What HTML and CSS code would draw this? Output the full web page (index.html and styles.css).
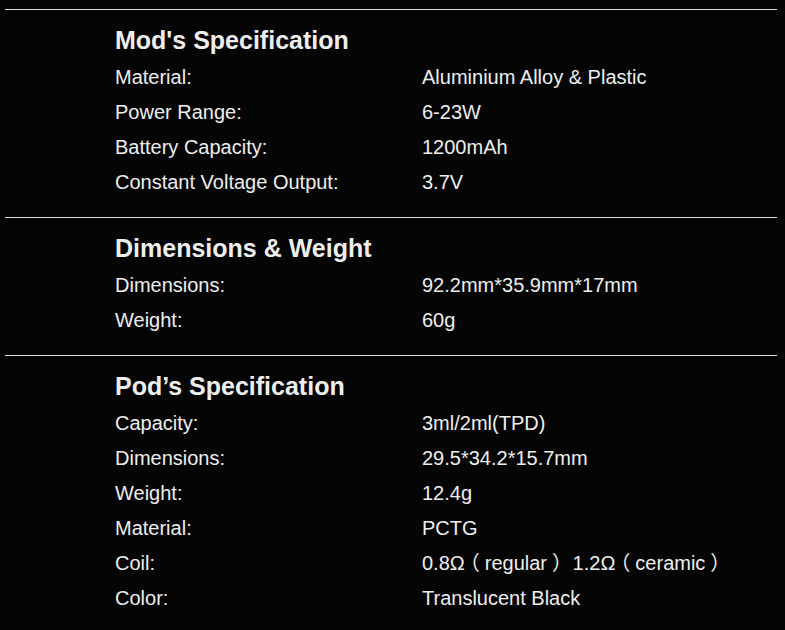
FILE: index.html
```html
<!DOCTYPE html>
<html>
<head>
<meta charset="utf-8">
<link rel="stylesheet" href="styles.css">
</head>
<body>
<div class="specs">
  <section class="spec">
    <h2 class="spec-title">Mod's Specification</h2>
    <div class="spec-grid">
      <div class="label">Material:</div><div class="value">Aluminium Alloy &amp; Plastic</div>
      <div class="label">Power Range:</div><div class="value">6-23W</div>
      <div class="label">Battery Capacity:</div><div class="value">1200mAh</div>
      <div class="label">Constant Voltage Output:</div><div class="value">3.7V</div>
    </div>
  </section>
  <section class="spec">
    <h2 class="spec-title">Dimensions &amp; Weight</h2>
    <div class="spec-grid">
      <div class="label">Dimensions:</div><div class="value">92.2mm*35.9mm*17mm</div>
      <div class="label">Weight:</div><div class="value">60g</div>
    </div>
  </section>
  <section class="spec">
    <h2 class="spec-title">Pod’s Specification</h2>
    <div class="spec-grid">
      <div class="label">Capacity:</div><div class="value">3ml/2ml(TPD)</div>
      <div class="label">Dimensions:</div><div class="value">29.5*34.2*15.7mm</div>
      <div class="label">Weight:</div><div class="value">12.4g</div>
      <div class="label">Material:</div><div class="value">PCTG</div>
      <div class="label">Coil:</div><div class="value">0.8Ω<span class="fw">（</span>regular<span class="fw">）</span> 1.2Ω<span class="fw">（</span>ceramic<span class="fw">）</span></div>
      <div class="label">Color:</div><div class="value">Translucent Black</div>
    </div>
  </section>
</div>
</body>
</html>
```
FILE: styles.css
```css
html, body {
  margin: 0;
  padding: 0;
  background: #050505;
}
body {
  font-family: "Liberation Sans", Arial, "Noto Sans CJK SC", sans-serif;
  color: #eeeeee;
  padding: 9px 8px 0 5px;
}
.specs {
  width: 772px;
}
.spec {
  border-top: 1px solid #dddddd;
  padding: 15px 0 17px 110px;
}
.spec-title {
  margin: 0 0 5px 0;
  font-size: 25px;
  line-height: 30px;
  font-weight: bold;
}
.spec-grid {
  display: grid;
  grid-template-columns: 307px 1fr;
  font-size: 20px;
  line-height: 35px;
}
.fw {
  display: inline-block;
  width: 20px;
  line-height: 20px;
  text-align: center;
  font-family: "Noto Sans CJK SC", sans-serif;
  font-feature-settings: "halt";
}
```
